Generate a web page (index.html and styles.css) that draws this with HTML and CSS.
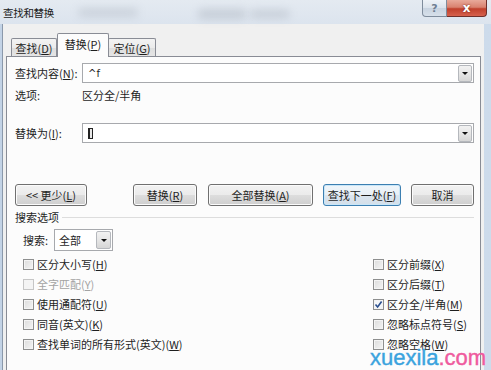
FILE: index.html
```html
<!DOCTYPE html>
<html lang="zh-CN">
<head>
  <meta charset="UTF-8">
  <title>查找和替换</title>
  <link rel="stylesheet" href="styles.css">
</head>
<body>
  <div class="window">
    <!-- Title bar -->
    <div class="titlebar">
      <div class="glass-blur b1"></div>
      <div class="glass-blur b2"></div>
      <div class="glass-blur b3"></div>
      <span class="title">查找和替换</span>
      <div class="caption">
        <div class="cap-btn help">?</div>
        <div class="cap-btn close">x</div>
      </div>
    </div>

    <div class="client">
      <div class="tabs">
        <div class="tab tab-find">查找(<u>D</u>)</div>
        <div class="tab tab-replace active">替换(<u>P</u>)</div>
        <div class="tab tab-goto">定位(<u>G</u>)</div>
      </div>

      <div class="panel">
        <div class="field-row first">
          <label class="field-label">查找内容(<u>N</u>):</label>
          <div class="combo">
            <span class="combo-text">^f</span>
            <span class="combo-arrow"><i></i></span>
          </div>
        </div>

        <div class="options-row">
          <span class="field-label">选项:</span>
          <span>区分全/半角</span>
        </div>

        <div class="field-row second">
          <label class="field-label">替换为(<u>I</u>):</label>
          <div class="combo">
            <span class="caret"><span class="caret-box"></span></span>
            <span class="combo-arrow"><i></i></span>
          </div>
        </div>

        <div class="buttons">
          <button class="btn btn-less">&lt;&lt; 更少(<u>L</u>)</button>
          <button class="btn btn-replace">替换(<u>R</u>)</button>
          <button class="btn btn-all">全部替换(<u>A</u>)</button>
          <button class="btn btn-next focused">查找下一处(<u>F</u>)</button>
          <button class="btn btn-cancel">取消</button>
        </div>

        <div class="group-title">搜索选项</div>

        <div class="search-row">
          <span class="search-label">搜索:</span>
          <div class="select">
            <span class="select-text">全部</span>
            <span class="select-arrow"><i></i></span>
          </div>
        </div>

        <div class="checks">
          <div class="check"><span class="box"></span>区分大小写(<u>H</u>)</div>
          <div class="check"><span class="box"></span>区分前缀(<u>X</u>)</div>
          <div class="check disabled"><span class="box"></span>全字匹配(<u>Y</u>)</div>
          <div class="check"><span class="box"></span>区分后缀(<u>T</u>)</div>
          <div class="check"><span class="box"></span>使用通配符(<u>U</u>)</div>
          <div class="check"><span class="box checked"><svg viewBox="0 0 9 9" width="9" height="9"><path d="M1.5 4.5 L3.6 7 L7.6 1.5" fill="none" stroke="#2b4f8e" stroke-width="1.6"/></svg></span>区分全/半角(<u>M</u>)</div>
          <div class="check"><span class="box"></span>同音(英文)(<u>K</u>)</div>
          <div class="check"><span class="box"></span>忽略标点符号(<u>S</u>)</div>
          <div class="check"><span class="box"></span>查找单词的所有形式(英文)(<u>W</u>)</div>
          <div class="check"><span class="box"></span>忽略空格(<u>W</u>)</div>
        </div>
      </div>
    </div>

    <div class="watermark">xuexila<span>.com</span></div>
  </div>
</body>
</html>
```

FILE: styles.css
```css
* {
  margin: 0;
  padding: 0;
  box-sizing: border-box;
}

body {
  width: 491px;
  height: 370px;
  overflow: hidden;
  font-family: "Noto Sans CJK SC", "Liberation Sans", sans-serif;
  font-size: 11px;
  color: #1e1e1e;
}

u {
  text-decoration: underline;
  text-underline-offset: 1px;
}

.window {
  position: relative;
  width: 491px;
  height: 370px;
  display: flex;
  flex-direction: column;
  background: linear-gradient(90deg, #c3d3e6 0%, #cddbeb 100%);
  overflow: hidden;
}

/* Title bar */
.titlebar {
  position: relative;
  height: 24px;
  display: flex;
  align-items: flex-start;
  background: linear-gradient(180deg, #e4eaf1 0%, #dce4ee 100%);
}

.glass-blur {
  position: absolute;
  background: #8d96a2;
  opacity: 0.25;
  filter: blur(4px);
  border-radius: 4px;
}

.b1 { left: 78px; top: 8px; width: 60px; height: 9px; }
.b2 { left: 198px; top: 9px; width: 48px; height: 10px; opacity: 0.3; }
.b3 { left: 250px; top: 10px; width: 40px; height: 8px; opacity: 0.3; }

.title {
  position: relative;
  padding: 5px 0 0 3px;
  font-size: 10.5px;
  color: #1a1a1a;
  letter-spacing: -0.3px;
}

.caption {
  position: relative;
  margin-left: auto;
  margin-right: 4px;
  display: flex;
}

.cap-btn {
  height: 17px;
  display: flex;
  align-items: center;
  justify-content: center;
  font-family: "DejaVu Sans", sans-serif;
  font-weight: bold;
  border-radius: 0 0 4px 4px;
}

.help {
  width: 25px;
  border: 1px solid #7f8c9c;
  border-top: none;
  border-radius: 0 0 0 4px;
  background: linear-gradient(180deg, #eef2f7 0%, #dbe3ec 50%, #c8d3e0 51%, #d7e0ea 100%);
  color: #6f7f93;
  font-size: 11px;
}

.close {
  width: 40px;
  border: 1px solid #6f2f2a;
  border-top: none;
  border-left: none;
  border-radius: 0 0 4px 0;
  background: linear-gradient(180deg, #e8a99a 0%, #d9826f 45%, #c0402c 55%, #d6614d 100%);
  color: #ffffff;
  font-size: 12px;
  text-shadow: 0 0 2px #6a1f18;
}

/* Client area */
.client {
  flex: 1;
  display: flex;
  flex-direction: column;
  margin: 0 7px 0 2px;
  padding: 9px 3px 0 3px;
  background: #f0f0f0;
  border-left: 1px solid #8b99ab;
}

.tabs {
  display: flex;
  align-items: flex-end;
  padding-left: 5px;
  height: 23px;
}

.tab {
  height: 18px;
  display: flex;
  align-items: center;
  justify-content: center;
  border: 1px solid #898c95;
  border-bottom: none;
  border-radius: 2px 2px 0 0;
  background: linear-gradient(180deg, #f3f3f3 0%, #ebebeb 50%, #dedede 51%, #e5e5e5 100%);
}

.tab + .tab {
  border-left: none;
}

.tab-find { width: 46px; }
.tab-goto { width: 48px; }

.tab.active {
  width: 52px;
  height: 24px;
  margin-bottom: -1px;
  position: relative;
  z-index: 1;
  border-left: 1px solid #898c95;
  background: #fcfcfc;
  padding-bottom: 3px;
}

.tab-goto {
  border-left: 1px solid #898c95 !important;
  margin-left: -1px;
}

.panel {
  flex: 1;
  background: #fcfcfc;
  border: 1px solid #898c95;
  border-bottom: none;
  padding: 6px 6px 0 8px;
}

.field-row {
  display: flex;
  align-items: center;
  height: 20px;
}

.field-label {
  width: 67px;
  flex-shrink: 0;
}

.combo {
  flex: 1;
  height: 20px;
  display: flex;
  align-items: center;
  border: 1px solid #a7a9ad;
  background: #ffffff;
  padding: 1px;
}

.combo-text {
  flex: 1;
  padding-left: 4px;
  font-family: "DejaVu Sans", sans-serif;
  font-size: 10px;
}

.caret {
  flex: 1;
  display: flex;
  align-items: center;
  padding-left: 4px;
}

.caret-box {
  width: 5px;
  height: 11px;
  border: 1px solid #222;
  border-left-width: 2px;
  background: #e8e8e8;
}

.combo-arrow,
.select-arrow {
  width: 14px;
  height: 17px;
  display: flex;
  align-items: center;
  justify-content: center;
  border: 1px solid #b5b8bd;
  border-radius: 2px;
  background: linear-gradient(180deg, #f2f2f2 0%, #e6e6e6 50%, #d6d6d6 100%);
}

.combo-arrow i,
.select-arrow i {
  width: 0;
  height: 0;
  border-left: 3px solid transparent;
  border-right: 3px solid transparent;
  border-top: 3px solid #111;
}

.options-row {
  display: flex;
  align-items: center;
  height: 18px;
  margin-top: 3px;
}

.field-row.second {
  margin-top: 19px;
}

/* Buttons */
.buttons {
  display: flex;
  margin-top: 41px;
  height: 22px;
}

.btn {
  height: 22px;
  font-family: inherit;
  font-size: 11px;
  color: #1e1e1e;
  border: 1px solid #707070;
  border-radius: 3px;
  background: linear-gradient(180deg, #f2f2f2 0%, #ebebeb 50%, #dddddd 51%, #cfcfcf 100%);
  box-shadow: inset 0 0 0 1px #fbfbfb;
}

.btn-less { width: 72px; }
.btn-replace { width: 64px; margin-left: 46px; }
.btn-all { width: 105px; margin-left: 11px; }
.btn-next { width: 78px; margin-left: 10px; }
.btn-cancel { width: 63px; margin-left: 10px; }

.btn.focused {
  border-color: #3c7fb1;
  box-shadow: inset 0 0 0 1px #c9e6f8;
  background: linear-gradient(180deg, #f0f6fa 0%, #e8eff5 50%, #dbe5ee 51%, #d4dfe9 100%);
}

/* Search options */
.group-title {
  display: flex;
  align-items: center;
  height: 14px;
  margin-top: 4px;
}

.group-title::after {
  content: "";
  flex: 1;
  margin-left: 3px;
  border-top: 1px solid #dddddd;
}

.search-row {
  display: flex;
  align-items: center;
  margin-top: 5px;
  padding-left: 8px;
  height: 22px;
}

.search-label {
  width: 31px;
}

.select {
  width: 59px;
  height: 22px;
  display: flex;
  align-items: center;
  border: 1px solid #a7a9ad;
  background: #ffffff;
  padding: 1px;
}

.select-text {
  flex: 1;
  padding-left: 3px;
}

.select-arrow {
  width: 15px;
  height: 18px;
}

.checks {
  display: grid;
  grid-template-columns: 350px auto;
  grid-auto-rows: 20px;
  margin-top: 3px;
  padding-left: 8px;
}

.check {
  display: flex;
  align-items: center;
  white-space: nowrap;
}

.box {
  width: 11px;
  height: 11px;
  margin-right: 3px;
  display: flex;
  align-items: center;
  justify-content: center;
  border: 1px solid #8e8f8f;
  background: linear-gradient(135deg, #dcdcdc 0%, #f4f4f4 100%);
  box-shadow: inset 0 0 0 1px #f4f4f4;
}

.box.checked {
  background: #f4f6f8;
}

.check.disabled {
  color: #a3a3a3;
}

.check.disabled .box {
  border-color: #c6c6c6;
  background: #f4f4f4;
}

/* Watermark */
.watermark {
  position: absolute;
  left: 370px;
  top: 352px;
  font-family: "Liberation Sans", Arial, sans-serif;
  font-size: 22px;
  line-height: 12px;
  color: #3aa3de;
  -webkit-text-stroke: 0.4px #3aa3de;
}

.watermark span {
  color: #ef5b9e;
  -webkit-text-stroke: 0.4px #ef5b9e;
}
```
